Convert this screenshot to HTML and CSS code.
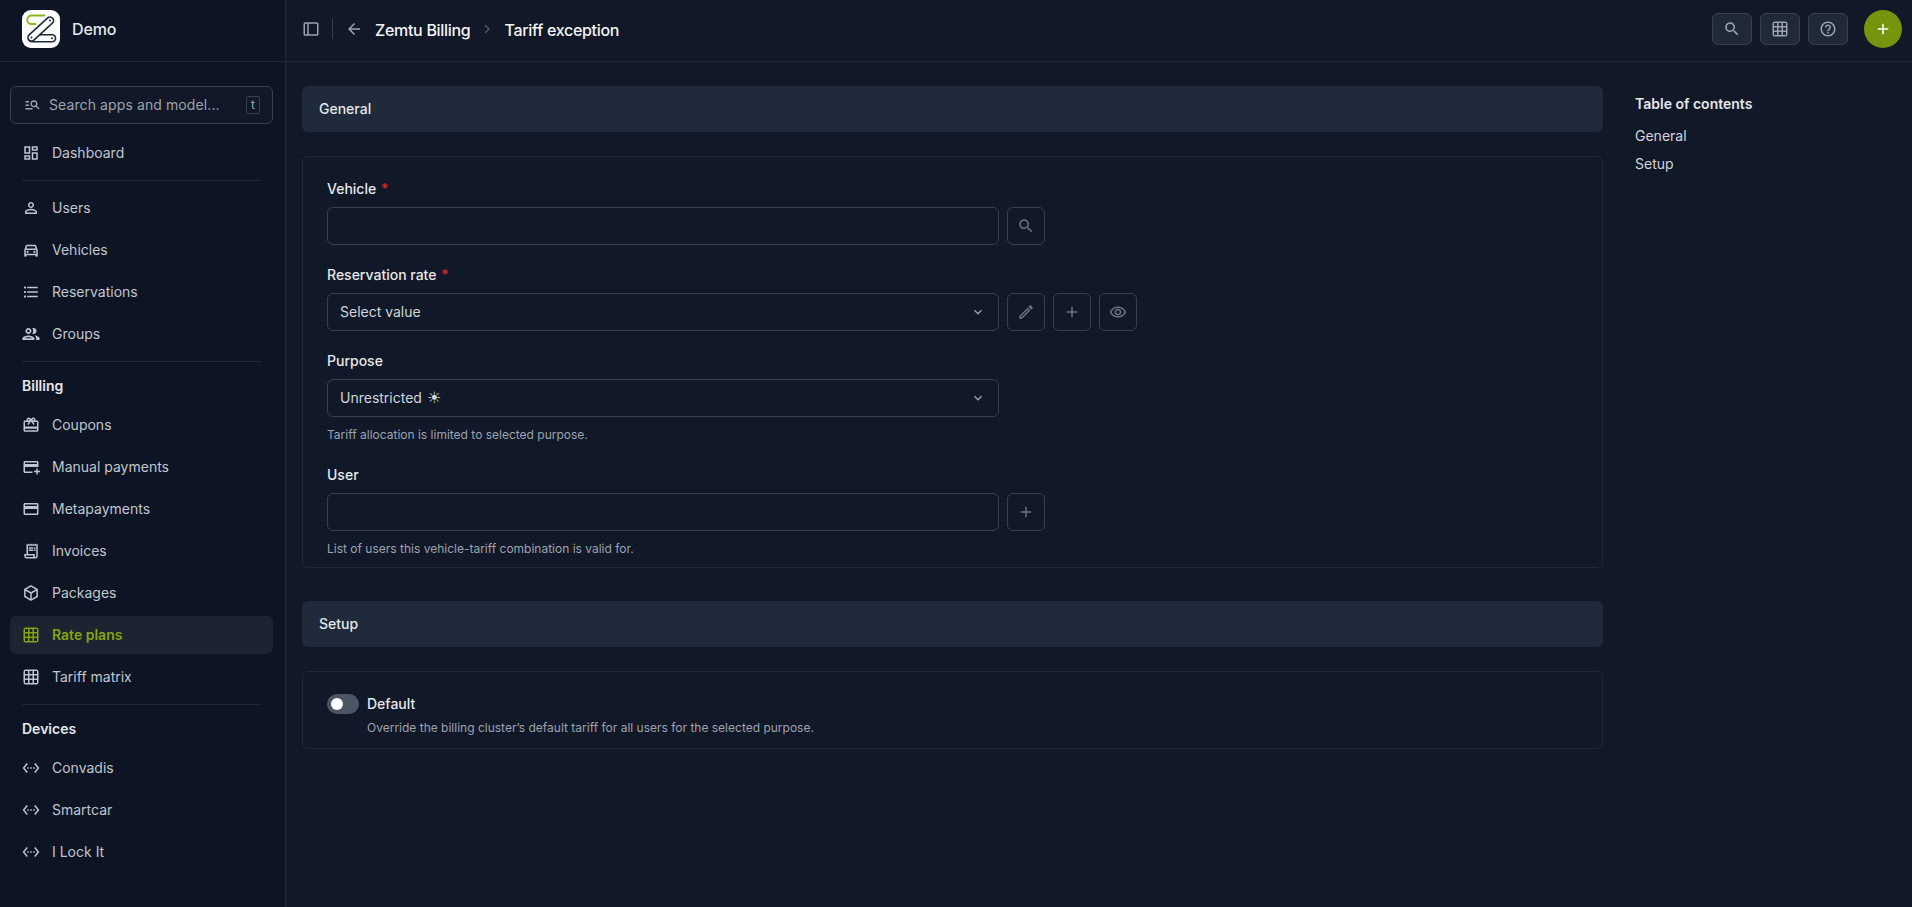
FILE: index.html
```html
<!DOCTYPE html>
<html lang="en">
<head>
    <meta charset="UTF-8">
    <meta name="viewport" content="width=device-width, initial-scale=1.0">
    <title>Tariff exception</title>
    <link rel="stylesheet" href="styles.css">
</head>
<body>
    <svg class="sprite" xmlns="http://www.w3.org/2000/svg">
        <symbol id="i-dashboard" viewBox="0 0 24 24"><path d="M19 5v2h-4V5h4M9 5v6H5V5h4m10 8v6h-4v-6h4M9 17v2H5v-2h4M21 3h-8v6h8V3zM11 3H3v10h8V3zm10 8h-8v10h8V11zm-10 4H3v6h8v-6z"/></symbol>
        <symbol id="i-person" viewBox="0 0 24 24"><path d="M12 5.9c1.16 0 2.1.94 2.1 2.1s-.94 2.1-2.1 2.1S9.9 9.16 9.9 8s.94-2.1 2.1-2.1m0 9c2.97 0 6.1 1.46 6.1 2.1v1.1H5.9V17c0-.64 3.13-2.1 6.1-2.1M12 4C9.79 4 8 5.79 8 8s1.79 4 4 4 4-1.79 4-4-1.79-4-4-4zm0 9c-2.67 0-8 1.34-8 4v3h16v-3c0-2.66-5.33-4-8-4z"/></symbol>
        <symbol id="i-car" viewBox="0 0 24 24"><path d="M18.92 6.01C18.72 5.42 18.16 5 17.5 5h-11c-.66 0-1.21.42-1.42 1.01L3 12v8c0 .55.45 1 1 1h1c.55 0 1-.45 1-1v-1h12v1c0 .55.45 1 1 1h1c.55 0 1-.45 1-1v-8l-2.08-5.99zM6.85 7h10.29l1.08 3.11H5.77L6.85 7zM19 17H5v-5h14v5z"/><circle cx="7.5" cy="14.5" r="1.5"/><circle cx="16.5" cy="14.5" r="1.5"/></symbol>
        <symbol id="i-list" viewBox="0 0 24 24"><path d="M4 10.5c-.83 0-1.5.67-1.5 1.5s.67 1.5 1.5 1.5 1.5-.67 1.5-1.5-.67-1.5-1.5-1.5zm0-6c-.83 0-1.5.67-1.5 1.5S3.17 7.5 4 7.5 5.5 6.83 5.5 6 4.83 4.5 4 4.5zm0 12c-.83 0-1.5.68-1.5 1.5s.68 1.5 1.5 1.5 1.5-.68 1.5-1.5-.67-1.5-1.5-1.5zM7 19h14v-2H7v2zm0-6h14v-2H7v2zm0-8v2h14V5H7z"/></symbol>
        <symbol id="i-group" viewBox="1.5 1.5 21 21"><path d="M9 13.75c-2.34 0-7 1.17-7 3.5V19h14v-1.75c0-2.33-4.66-3.5-7-3.5zM4.34 17c.84-.58 2.87-1.25 4.66-1.25s3.82.67 4.66 1.25H4.34zM9 12c1.93 0 3.5-1.57 3.5-3.5S10.93 5 9 5 5.5 6.57 5.5 8.5 7.07 12 9 12zm0-5c.83 0 1.5.67 1.5 1.5S9.83 10 9 10s-1.5-.67-1.5-1.5S8.17 7 9 7zm7.04 6.81c1.16.84 1.96 1.96 1.96 3.44V19h4v-1.75c0-2.02-3.5-3.17-5.96-3.44zM15 12c1.93 0 3.5-1.57 3.5-3.5S16.93 5 15 5c-.54 0-1.04.13-1.5.35.63.89 1 1.98 1 3.15s-.37 2.26-1 3.15c.46.22.96.35 1.5.35z"/></symbol>
        <symbol id="i-redeem" viewBox="0 0 24 24"><path d="M20 6h-2.18c.11-.31.18-.65.18-1 0-1.66-1.34-3-3-3-1.05 0-1.96.54-2.5 1.35l-.5.67-.5-.68C10.96 2.54 10.05 2 9 2 7.34 2 6 3.34 6 5c0 .35.07.69.18 1H4c-1.11 0-1.99.89-1.99 2L2 19c0 1.11.89 2 2 2h16c1.11 0 2-.89 2-2V8c0-1.11-.89-2-2-2zm-5-2c.55 0 1 .45 1 1s-.45 1-1 1-1-.45-1-1 .45-1 1-1zM9 4c.55 0 1 .45 1 1s-.45 1-1 1-1-.45-1-1 .45-1 1-1zm11 15H4v-2h16v2zm0-5H4V8h5.08L7 10.83 8.62 12 12 7.4l3.38 4.6L17 10.83 14.92 8H20v6z"/></symbol>
        <symbol id="i-addcard" viewBox="0 0 24 24"><path d="M20 4H4c-1.11 0-1.99.89-1.99 2L2 18c0 1.11.89 2 2 2h10v-2H4v-6h18V6c0-1.11-.89-2-2-2zm0 4H4V6h16v2zm4 9v2h-3v3h-2v-3h-3v-2h3v-3h2v3h3z"/></symbol>
        <symbol id="i-card" viewBox="0 0 24 24"><path d="M20 4H4c-1.11 0-1.99.89-1.99 2L2 18c0 1.11.89 2 2 2h16c1.11 0 2-.89 2-2V6c0-1.11-.89-2-2-2zm0 14H4v-6h16v6zm0-10H4V6h16v2z"/></symbol>
        <symbol id="i-receipt" viewBox="0 0 24 24"><path d="M19.5 3.5 18 2l-1.5 1.5L15 2l-1.5 1.5L12 2l-1.5 1.5L9 2 7.5 3.5 6 2v14H3v3c0 1.66 1.34 3 3 3h12c1.66 0 3-1.34 3-3V2l-1.5 1.5zM15 20H6c-.55 0-1-.45-1-1v-1h10v2zm4-1c0 .55-.45 1-1 1s-1-.45-1-1v-3H8V5h11v14z"/><path d="M9 7h6v2H9zM16 7h2v2h-2zM9 10h6v2H9zM16 10h2v2h-2z"/></symbol>
        <symbol id="i-package" viewBox="0 0 24 24"><path d="M12 2.6 20.2 7.3v9.4L12 21.4l-8.2-4.7V7.3zM4.2 7.5 12 12l7.8-4.5M12 12v9" fill="none" stroke="currentColor" stroke-width="2" stroke-linejoin="round"/></symbol>
        <symbol id="i-grid" viewBox="0 0 24 24"><path fill-rule="evenodd" d="M5 2h14a3 3 0 0 1 3 3v14a3 3 0 0 1-3 3H5a3 3 0 0 1-3-3V5a3 3 0 0 1 3-3zM4 4v4h4V4zm6 0v4h4V4zm6 0v4h4V4zM4 10v4h4v-4zm6 0v4h4v-4zm6 0v4h4v-4zM4 16v4h4v-4zm6 0v4h4v-4zm6 0v4h4v-4z"/></symbol>
        <symbol id="i-ethernet" viewBox="0 0 24 24"><path d="M7.77 6.76 6.23 5.48.82 12l5.41 6.52 1.54-1.28L3.42 12l4.35-5.24zM7 13h2v-2H7v2zm10-2h-2v2h2v-2zm-6 2h2v-2h-2v2zm6.77-7.52-1.54 1.28L20.58 12l-4.35 5.24 1.54 1.28L23.18 12l-5.41-6.52z"/></symbol>
        <symbol id="i-search" viewBox="0 0 24 24"><path d="M15.5 14h-.79l-.28-.27C15.41 12.59 16 11.11 16 9.5 16 5.91 13.09 3 9.5 3S3 5.91 3 9.5 5.91 16 9.5 16c1.61 0 3.09-.59 4.23-1.57l.27.28v.79l5 4.99L20.49 19l-4.99-5zm-6 0C7.01 14 5 11.99 5 9.5S7.01 5 9.5 5 14 7.01 14 9.5 11.99 14 9.5 14z"/></symbol>
        <symbol id="i-manage" viewBox="0 0 24 24"><path d="M7 9H2V7h5v2zm0 3H2v2h5v-2zm13.59 7-3.83-3.83c-.8.52-1.74.83-2.76.83-2.76 0-5-2.24-5-5s2.24-5 5-5 5 2.24 5 5c0 1.02-.31 1.96-.83 2.75L22 17.59 20.59 19zM17 11c0-1.65-1.35-3-3-3s-3 1.35-3 3 1.35 3 3 3 3-1.35 3-3zM2 19h10v-2H2v2z"/></symbol>
        <symbol id="i-sidebar" viewBox="0 0 24 24"><path fill-rule="evenodd" d="M4 3h16a2 2 0 0 1 2 2v14a2 2 0 0 1-2 2H4a2 2 0 0 1-2-2V5a2 2 0 0 1 2-2zm0 2v14h3V5zm5 0v14h11V5z"/></symbol>
        <symbol id="i-back" viewBox="0 0 24 24"><path d="M20 11H7.83l5.59-5.59L12 4l-8 8 8 8 1.41-1.41L7.83 13H20v-2z"/></symbol>
        <symbol id="i-chevron" viewBox="0 0 24 24"><path d="M10 6 8.59 7.41 13.17 12l-4.58 4.59L10 18l6-6z"/></symbol>
        <symbol id="i-expand" viewBox="0 0 24 24"><path d="M16.59 8.59 12 13.17 7.41 8.59 6 10l6 6 6-6z"/></symbol>
        <symbol id="i-add" viewBox="0 0 24 24"><path d="M19 13h-6v6h-2v-6H5v-2h6V5h2v6h6v2z"/></symbol>
        <symbol id="i-edit" viewBox="0 0 24 24"><path d="M3 17.25V21h3.75L17.81 9.94l-3.75-3.75L3 17.25zM5.92 19H5v-.92l9.06-9.06.92.92L5.92 19zM20.71 7.04a.996.996 0 0 0 0-1.41l-2.34-2.34c-.2-.2-.45-.29-.71-.29s-.51.1-.7.29l-1.83 1.83 3.75 3.75 1.83-1.83z"/></symbol>
        <symbol id="i-eye" viewBox="0 0 24 24"><path d="M12 6.5c3.79 0 7.17 2.13 8.82 5.5-1.65 3.37-5.02 5.5-8.82 5.5S4.83 15.37 3.18 12C4.83 8.63 8.21 6.5 12 6.5m0-2C7 4.5 2.73 7.61 1 12c1.73 4.39 6 7.5 11 7.5s9.27-3.11 11-7.5c-1.73-4.39-6-7.5-11-7.5zm0 5c1.38 0 2.5 1.12 2.5 2.5s-1.12 2.5-2.5 2.5-2.5-1.12-2.5-2.5 1.12-2.5 2.5-2.5m0-2c-2.48 0-4.5 2.02-4.5 4.5s2.02 4.5 4.5 4.5 4.5-2.02 4.5-4.5-2.02-4.5-4.5-4.5z"/></symbol>
        <symbol id="i-help" viewBox="0 0 24 24"><path d="M11 18h2v-2h-2v2zm1-16C6.48 2 2 6.48 2 12s4.48 10 10 10 10-4.48 10-10S17.52 2 12 2zm0 18c-4.41 0-8-3.59-8-8s3.59-8 8-8 8 3.59 8 8-3.59 8-8 8zm0-14c-2.21 0-4 1.79-4 4h2c0-1.1.9-2 2-2s2 .9 2 2c0 2-3 1.75-3 5h2c0-2.25 3-2.5 3-5 0-2.21-1.79-4-4-4z"/></symbol>
    </svg>

    <div class="page">
        <aside class="sidebar">
            <div class="brand">
                <svg class="logo" viewBox="0 0 38 38" xmlns="http://www.w3.org/2000/svg">
                    <rect width="38" height="38" rx="9" fill="#fff"/>
                    <path d="M23 5.5H9.5a4 4 0 0 0 0 8.5H14" fill="none" stroke="#8ab51c" stroke-width="1.8"/>
                    <path d="M10 28.2H30" fill="none" stroke="#1f2a3d" stroke-width="8.6" stroke-linecap="round"/>
                    <path d="M10 28.2H30" fill="none" stroke="#fff" stroke-width="5.4" stroke-linecap="round"/>
                    <path d="M9.5 27.5 28 10.5" fill="none" stroke="#1f2a3d" stroke-width="8.6" stroke-linecap="round"/>
                    <path d="M9.5 27.5 28 10.5" fill="none" stroke="#fff" stroke-width="5.4" stroke-linecap="round"/>
                    <circle cx="28" cy="10.5" r="1" fill="#1f2a3d"/>
                    <circle cx="30" cy="28.2" r="1" fill="#1f2a3d"/>
                    <circle cx="9.5" cy="27.5" r="1" fill="#1f2a3d"/>
                </svg>
                <span>Demo</span>
            </div>
            <div class="side-body">
                <div class="side-search">
                    <svg class="icon icon-search"><use href="#i-manage"/></svg>
                    <span class="side-search-text">Search apps and model...</span>
                    <kbd>t</kbd>
                </div>
                <nav class="nav first">
                    <a class="nav-item"><svg class="icon"><use href="#i-dashboard"/></svg>Dashboard</a>
                </nav>
                <hr>
                <nav class="nav">
                    <a class="nav-item"><svg class="icon"><use href="#i-person"/></svg>Users</a>
                    <a class="nav-item"><svg class="icon"><use href="#i-car"/></svg>Vehicles</a>
                    <a class="nav-item"><svg class="icon"><use href="#i-list"/></svg>Reservations</a>
                    <a class="nav-item"><svg class="icon"><use href="#i-group"/></svg>Groups</a>
                </nav>
                <hr>
                <h3 class="nav-title">Billing</h3>
                <nav class="nav">
                    <a class="nav-item"><svg class="icon"><use href="#i-redeem"/></svg>Coupons</a>
                    <a class="nav-item"><svg class="icon"><use href="#i-addcard"/></svg>Manual payments</a>
                    <a class="nav-item"><svg class="icon"><use href="#i-card"/></svg>Metapayments</a>
                    <a class="nav-item"><svg class="icon"><use href="#i-receipt"/></svg>Invoices</a>
                    <a class="nav-item"><svg class="icon"><use href="#i-package"/></svg>Packages</a>
                    <a class="nav-item active"><svg class="icon"><use href="#i-grid"/></svg>Rate plans</a>
                    <a class="nav-item"><svg class="icon"><use href="#i-grid"/></svg>Tariff matrix</a>
                </nav>
                <hr>
                <h3 class="nav-title">Devices</h3>
                <nav class="nav">
                    <a class="nav-item"><svg class="icon"><use href="#i-ethernet"/></svg>Convadis</a>
                    <a class="nav-item"><svg class="icon"><use href="#i-ethernet"/></svg>Smartcar</a>
                    <a class="nav-item"><svg class="icon"><use href="#i-ethernet"/></svg>I Lock It</a>
                </nav>
            </div>
        </aside>

        <div class="main">
            <header class="topbar">
                <div class="crumbs">
                    <svg class="icon crumb-icon"><use href="#i-sidebar"/></svg>
                    <span class="crumb-divider"></span>
                    <svg class="icon crumb-icon"><use href="#i-back"/></svg>
                    <span class="crumb">Zemtu Billing</span>
                    <svg class="icon crumb-chevron"><use href="#i-chevron"/></svg>
                    <span class="crumb">Tariff exception</span>
                </div>
                <div class="actions">
                    <button class="top-btn"><svg class="icon"><use href="#i-search"/></svg></button>
                    <button class="top-btn"><svg class="icon"><use href="#i-grid"/></svg></button>
                    <button class="top-btn"><svg class="icon"><use href="#i-help"/></svg></button>
                    <button class="add-btn"><svg class="icon"><use href="#i-add"/></svg></button>
                </div>
            </header>

            <div class="content">
                <form class="form">
                    <h2 class="section-head">General</h2>
                    <div class="card">
                        <div class="field">
                            <label>Vehicle <em>*</em></label>
                            <div class="control-row">
                                <input type="text" class="input">
                                <button type="button" class="icon-btn"><svg class="icon"><use href="#i-search"/></svg></button>
                            </div>
                        </div>
                        <div class="field">
                            <label>Reservation rate <em>*</em></label>
                            <div class="control-row">
                                <div class="input select">Select value<svg class="icon select-arrow"><use href="#i-expand"/></svg></div>
                                <button type="button" class="icon-btn"><svg class="icon"><use href="#i-edit"/></svg></button>
                                <button type="button" class="icon-btn"><svg class="icon"><use href="#i-add"/></svg></button>
                                <button type="button" class="icon-btn"><svg class="icon"><use href="#i-eye"/></svg></button>
                            </div>
                        </div>
                        <div class="field">
                            <label>Purpose</label>
                            <div class="control-row">
                                <div class="input select">Unrestricted <span class="sun">&#9728;</span><svg class="icon select-arrow"><use href="#i-expand"/></svg></div>
                            </div>
                            <p class="help">Tariff allocation is limited to selected purpose.</p>
                        </div>
                        <div class="field">
                            <label>User</label>
                            <div class="control-row">
                                <input type="text" class="input">
                                <button type="button" class="icon-btn"><svg class="icon"><use href="#i-add"/></svg></button>
                            </div>
                            <p class="help">List of users this vehicle-tariff combination is valid for.</p>
                        </div>
                    </div>

                    <h2 class="section-head setup">Setup</h2>
                    <div class="card card-setup">
                        <div class="toggle-row">
                            <span class="toggle"></span>
                            <div>
                                <div class="toggle-label">Default</div>
                                <p class="toggle-help">Override the billing cluster’s default tariff for all users for the selected purpose.</p>
                            </div>
                        </div>
                    </div>
                </form>

                <aside class="toc">
                    <h4>Table of contents</h4>
                    <a>General</a>
                    <a>Setup</a>
                </aside>
            </div>
        </div>
    </div>
</body>
</html>
```

FILE: styles.css
```css
html, body {
    margin: 0;
    padding: 0;
    height: 100%;
    font-family: 'Inter', 'Liberation Sans', sans-serif;
    font-size: 14px;
    background-color: #111827;
    color: #d1d5db;
}
.sprite {
    display: none;
}
.page {
    display: flex;
    height: 907px;
    overflow: hidden;
}
.icon {
    width: 18px;
    height: 18px;
    fill: currentColor;
    flex-shrink: 0;
}

/* sidebar */
.sidebar {
    width: 285px;
    flex-shrink: 0;
    background-color: #0d1524;
    border-right: 1px solid #1f2937;
}
.brand {
    height: 58px;
    padding: 0 0 3px 22px;
    display: flex;
    align-items: center;
    gap: 12px;
    border-bottom: 1px solid #1f2937;
    font-size: 16px;
    font-weight: 500;
    letter-spacing: -0.1px;
    color: #e5e7eb;
}
.logo {
    width: 38px;
    height: 38px;
}
.side-body {
    padding: 24px 12px 0 10px;
}
.side-search {
    height: 38px;
    box-sizing: border-box;
    border: 1px solid #374151;
    border-radius: 6px;
    background-color: #111827;
    display: flex;
    align-items: center;
    padding: 0 12px 1px 13px;
    color: #9ca3af;
}
.icon-search {
    width: 17px;
    height: 17px;
}
.side-search-text {
    margin-left: 8px;
    flex: 1;
    letter-spacing: 0.1px;
}
kbd {
    width: 14px;
    height: 18px;
    box-sizing: border-box;
    border: 1px solid #374151;
    border-radius: 2px;
    font-family: 'Inter', sans-serif;
    font-size: 12px;
    line-height: 16px;
    text-align: center;
}
.nav {
    display: flex;
    flex-direction: column;
    gap: 4px;
}
.nav.first {
    margin-top: 10px;
}
.nav-item {
    height: 37px;
    padding: 0 0 1px 12px;
    border-radius: 6px;
    display: flex;
    align-items: center;
    gap: 12px;
    color: #c0c5ce;
}
.nav-item.active {
    background-color: #1c2431;
    color: #84a511;
    font-weight: 600;
}
hr {
    border: none;
    border-top: 1px solid #1f2937;
    margin: 8px 12px;
}
.nav-title {
    margin: 14px 12px 10px;
    font-size: 14px;
    line-height: 20px;
    font-weight: 600;
    color: #e5e7eb;
}

/* top bar */
.main {
    flex: 1;
    min-width: 0;
}
.topbar {
    height: 58px;
    border-bottom: 1px solid #1f2937;
    display: flex;
    align-items: center;
    justify-content: space-between;
    padding: 0 10px 3px 16px;
}
.crumbs {
    display: flex;
    align-items: center;
    color: #f3f4f6;
    font-size: 16px;
    font-weight: 500;
    letter-spacing: -0.3px;
}
.crumb {
    padding-top: 2px;
}
.crumb-icon {
    color: #9ca3af;
}
.crumb-divider {
    width: 1px;
    height: 20px;
    margin: 0 12px;
    background-color: #374151;
}
.crumb-icon + .crumb {
    margin-left: 12px;
}
.crumb-chevron {
    margin: 0 8px;
    color: #4b5563;
}
.actions {
    display: flex;
    align-items: center;
    gap: 8px;
}
.top-btn {
    width: 40px;
    height: 32px;
    padding: 0;
    border: 1px solid #374151;
    border-radius: 6px;
    background-color: #1f2937;
    color: #9ca3af;
    display: flex;
    align-items: center;
    justify-content: center;
}
.add-btn {
    width: 38px;
    height: 38px;
    padding: 0;
    margin-left: 8px;
    border: none;
    border-radius: 50%;
    background-color: #76950f;
    color: #fff;
    display: flex;
    align-items: center;
    justify-content: center;
}

/* form */
.content {
    display: flex;
    gap: 32px;
    padding: 24px 0 0 16px;
}
.form {
    width: 1301px;
    flex-shrink: 0;
}
.section-head {
    margin: 0;
    height: 46px;
    box-sizing: border-box;
    padding: 0 0 1px 17px;
    display: flex;
    align-items: center;
    border-radius: 6px;
    background-color: #1f2a3a;
    font-size: 14px;
    font-weight: 500;
    color: #e5e7eb;
}
.section-head.setup {
    margin-top: 33px;
}
.card {
    margin-top: 24px;
    border: 1px solid #1f2937;
    border-radius: 6px;
    padding: 22px 24px 9px;
}
.card-setup {
    padding-bottom: 11px;
}
.field {
    margin-bottom: 20px;
}
.field:last-child {
    margin-bottom: 0;
}
.field:has(.help) {
    margin-bottom: 21px;
}
.field:last-child:has(.help) {
    margin-bottom: 0;
}
label {
    display: block;
    line-height: 20px;
    font-weight: 500;
    color: #e5e7eb;
    margin-bottom: 8px;
}
label em {
    color: #dc2626;
    font-style: normal;
    margin-left: 1px;
}
.control-row {
    display: flex;
    gap: 8px;
}
.input {
    width: 672px;
    height: 38px;
    box-sizing: border-box;
    border: 1px solid #374151;
    border-radius: 6px;
    background: transparent;
    color: #d1d5db;
    font-family: inherit;
    font-size: 14px;
}
.select {
    display: flex;
    align-items: center;
    padding: 0 12px 1px;
    position: relative;
}
.select-arrow {
    position: absolute;
    right: 12px;
    top: 10px;
    width: 16px;
    height: 16px;
    color: #9ca3af;
}
.sun {
    font-family: 'DejaVu Sans', sans-serif;
    font-size: 16px;
    margin-left: 5px;
}
.icon-btn {
    width: 38px;
    height: 38px;
    padding: 0;
    border: 1px solid #374151;
    border-radius: 6px;
    background: transparent;
    color: #6b7280;
    display: flex;
    align-items: center;
    justify-content: center;
}
.help {
    margin: 9px 0 0;
    font-size: 12px;
    line-height: 18px;
    color: #9ca3af;
}
.toggle-row {
    display: flex;
    gap: 8px;
}
.toggle {
    width: 32px;
    height: 20px;
    box-sizing: border-box;
    padding: 4px;
    border-radius: 10px;
    background-color: #4b5563;
    flex-shrink: 0;
}
.toggle::before {
    content: "";
    display: block;
    width: 12px;
    height: 12px;
    border-radius: 50%;
    background-color: #fff;
}
.toggle-label {
    line-height: 20px;
    font-weight: 500;
    color: #e5e7eb;
}
.toggle-help {
    margin: 5px 0 0;
    font-size: 12px;
    line-height: 18px;
    color: #9ca3af;
}

/* table of contents */
.toc {
    display: flex;
    flex-direction: column;
    padding-top: 8px;
}
.toc h4 {
    margin: 0 0 12px;
    font-size: 14px;
    line-height: 20px;
    font-weight: 600;
    color: #e5e7eb;
}
.toc a {
    line-height: 20px;
    margin-bottom: 8px;
    color: #d1d5db;
}
```
